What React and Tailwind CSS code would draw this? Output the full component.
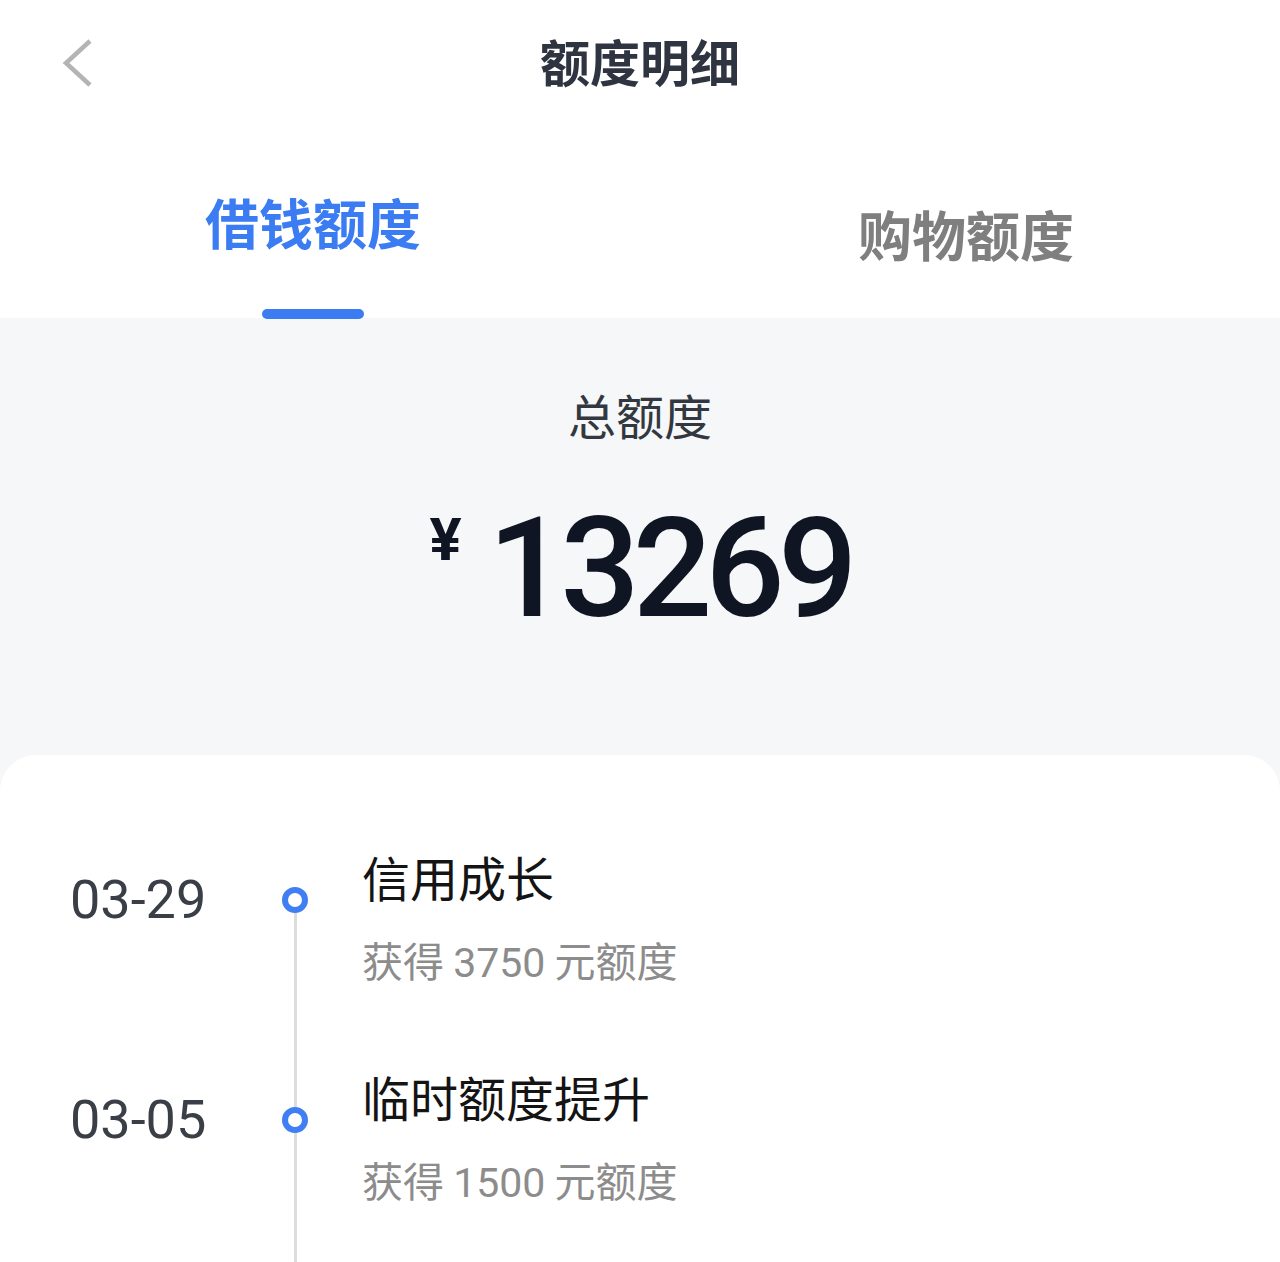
import React from "react"

const cjk = { fontFamily: '"Noto Sans CJK SC", "Noto Sans", sans-serif' }
const num = { fontFamily: 'Roboto, "Noto Sans", sans-serif' }

const records = [
  { date: "03-29", title: "信用成长", amount: "3750" },
  { date: "03-05", title: "临时额度提升", amount: "1500" },
]

function BackIcon() {
  return (
    <svg width="36" height="52" viewBox="0 0 36 52" fill="none">
      <polyline points="30,4 6,26 30,48" stroke="#b4b4b4" strokeWidth="4.5" strokeLinecap="butt" strokeLinejoin="miter" />
    </svg>
  )
}

function TimelineItem({ item, first }) {
  return (
    <div className="flex h-[220px] pl-[70px]">
      <div className="w-[212px]">
        <p className="mt-[21px] text-[54px] leading-none text-[#3a3f47]" style={num}>
          {item.date}
        </p>
      </div>
      <div className="flex w-[26px] flex-col items-center">
        <div className={first ? "h-[35px] w-[3px]" : "h-[35px] w-[3px] bg-[#dcdcdc]"} />
        <div className="size-[26px] rounded-full border-[6px] border-[#3f7ef3] bg-white" />
        <div className="w-[3px] flex-1 bg-[#dcdcdc]" />
      </div>
      <div className="pl-[54px]" style={cjk}>
        <p className="text-[48px] leading-none text-[#141414]">{item.title}</p>
        <p className="mt-[39px] text-[41px] leading-none text-[#8c8c8c]">
          获得 <span style={num}>{item.amount}</span> 元额度
        </p>
      </div>
    </div>
  )
}

export default function App() {
  return (
    <div className="min-h-[1262px] w-[1280px] overflow-hidden bg-white" style={cjk}>
      <header className="relative flex h-32 items-center justify-center pb-[8px]">
        <div className="absolute left-[60px] top-[37px]">
          <BackIcon />
        </div>
        <h1 className="text-[50px] leading-none font-semibold text-[#2f3540]">额度明细</h1>
      </header>

      <div className="grid h-[190px] grid-cols-2">
        <div className="flex flex-col items-center pt-[67px] pr-[14px]">
          <span className="text-[54px] leading-none font-bold text-[#3b7cf2]">借钱额度</span>
          <div className="mt-[60px] h-[10px] w-[102px] rounded-full bg-[#3b7cf2]" />
        </div>
        <div className="flex flex-col items-center pt-[79px] pl-[12px]">
          <span className="text-[54px] leading-none font-bold text-[#7f7f7f]">购物额度</span>
        </div>
      </div>

      <div className="bg-[#f6f7f9]">
        <div className="flex h-[437px] flex-col items-center pt-[72px]">
          <p className="text-[48px] leading-none text-[#333840]">总额度</p>
          <div className="mt-[60px] flex items-start text-[#0f1522]" style={num}>
            <span className="mt-[12px] mr-[26px] text-[60px] leading-none font-bold">¥</span>
            <span className="text-[140px] leading-none font-medium tracking-[-7px]">13269</span>
          </div>
        </div>

        <div className="rounded-t-[36px] bg-white pt-[97px]">
          {records.map((item, i) => (
            <TimelineItem key={item.date} item={item} first={i === 0} />
          ))}
        </div>
      </div>
    </div>
  )
}
